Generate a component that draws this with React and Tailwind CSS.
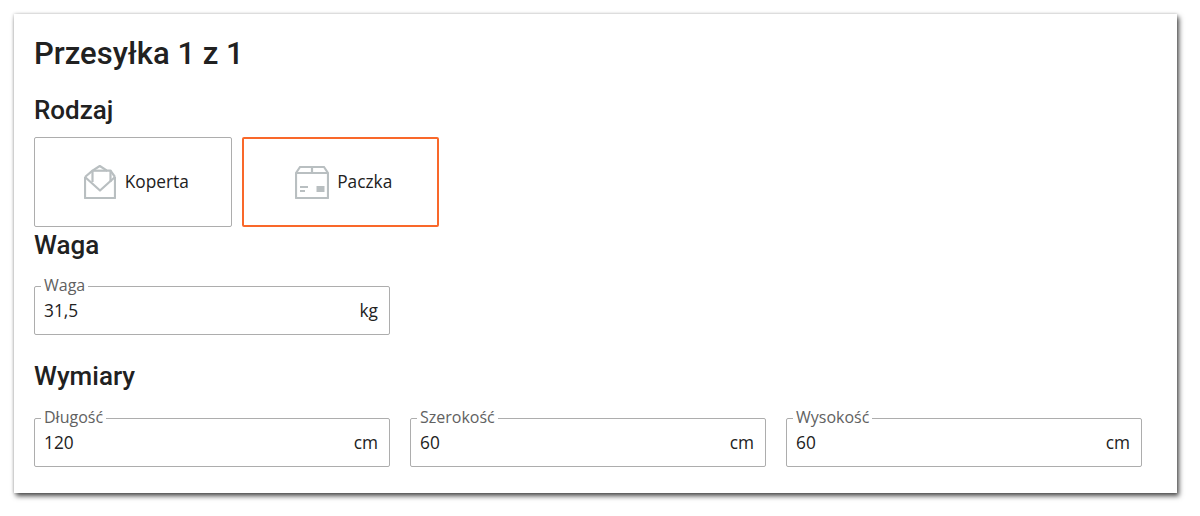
function Field({ label, value, unit, className = "" }) {
  return (
    <div className={`relative flex h-[49px] w-[356px] items-center justify-between rounded-[2px] border border-[#adadad] pl-[9px] pr-[11px] text-[17.3px] text-[#212121] ${className}`}>
      <span>{value}</span>
      <span>{unit}</span>
      <span className="absolute left-[6px] top-[-12px] bg-white px-[3px] text-[16px] leading-[20px] text-[#616161]">
        {label}
      </span>
    </div>
  );
}

function EnvelopeIcon() {
  return (
    <svg width="32" height="34" viewBox="0 0 32 34" fill="none" stroke="#b9bfc1" strokeWidth="2.2" strokeLinejoin="round">
      <path d="M1 12v21h30V12" />
      <path d="M1 12l15 13.5L31 12" />
      <path d="M1 12l7.5-6.3M31 12l-4.5-6.3" />
      <path d="M8.5 17V5.7l7.3-4.7 7.2 4.7h3.5V17" />
      <path d="M8.5 5.7H23" />
    </svg>
  );
}

function BoxIcon() {
  return (
    <svg width="34" height="33" viewBox="0 0 34 33" fill="none" stroke="#b9bfc1" strokeWidth="2.2">
      <path d="M1 7l4-6h24l4 6v25H1z" strokeLinejoin="round" />
      <path d="M1 7h32M17 1v6" />
      <path d="M5 21h8M5 25h5" />
      <rect x="21.5" y="20" width="8" height="6" fill="#b9bfc1" stroke="none" />
    </svg>
  );
}

function TypeCard({ icon, label, active }) {
  return (
    <div
      className={`flex h-[90px] w-[197.5px] items-center justify-center rounded-[2px] pl-[7px] text-[17.3px] text-[#212121] ${
        active ? "border-2 border-[#f9682a]" : "border border-[#adadad]"
      }`}
    >
      {icon}
      {label}
    </div>
  );
}

export default function App() {
  return (
    <main className="h-[516px] w-[1200px] bg-white pl-[14px] pt-[14px] font-['Open_Sans',sans-serif]">
      <div className="h-[479px] w-[1163px] bg-white pl-[20px] pt-[20px] shadow-[0_0_3px_rgba(0,0,0,0.2),2px_3px_5px_rgba(0,0,0,0.7)]">
        <h1 className="font-['Roboto',sans-serif] text-[31px] font-medium leading-[40px] text-[#212121]">
          Przesyłka 1 z 1
        </h1>
        <h2 className="mt-[18px] font-['Roboto',sans-serif] text-[26px] font-medium leading-[36px] text-[#212121]">
          Rodzaj
        </h2>
        <div className="mt-[9px] flex gap-[10px]">
          <TypeCard icon={<span className="mr-[9px] flex"><EnvelopeIcon /></span>} label="Koperta" />
          <TypeCard icon={<span className="mr-[8px] flex"><BoxIcon /></span>} label="Paczka" active />
        </div>
        <h2 className="font-['Roboto',sans-serif] text-[26px] font-medium leading-[36px] text-[#212121]">
          Waga
        </h2>
        <Field className="mt-[23px]" label="Waga" value="31,5" unit="kg" />
        <h2 className="mt-[23px] font-['Roboto',sans-serif] text-[26px] font-medium leading-[36px] text-[#212121]">
          Wymiary
        </h2>
        <div className="mt-[24px] flex gap-[20px]">
          <Field label="Długość" value="120" unit="cm" />
          <Field label="Szerokość" value="60" unit="cm" />
          <Field label="Wysokość" value="60" unit="cm" />
        </div>
      </div>
    </main>
  );
}
